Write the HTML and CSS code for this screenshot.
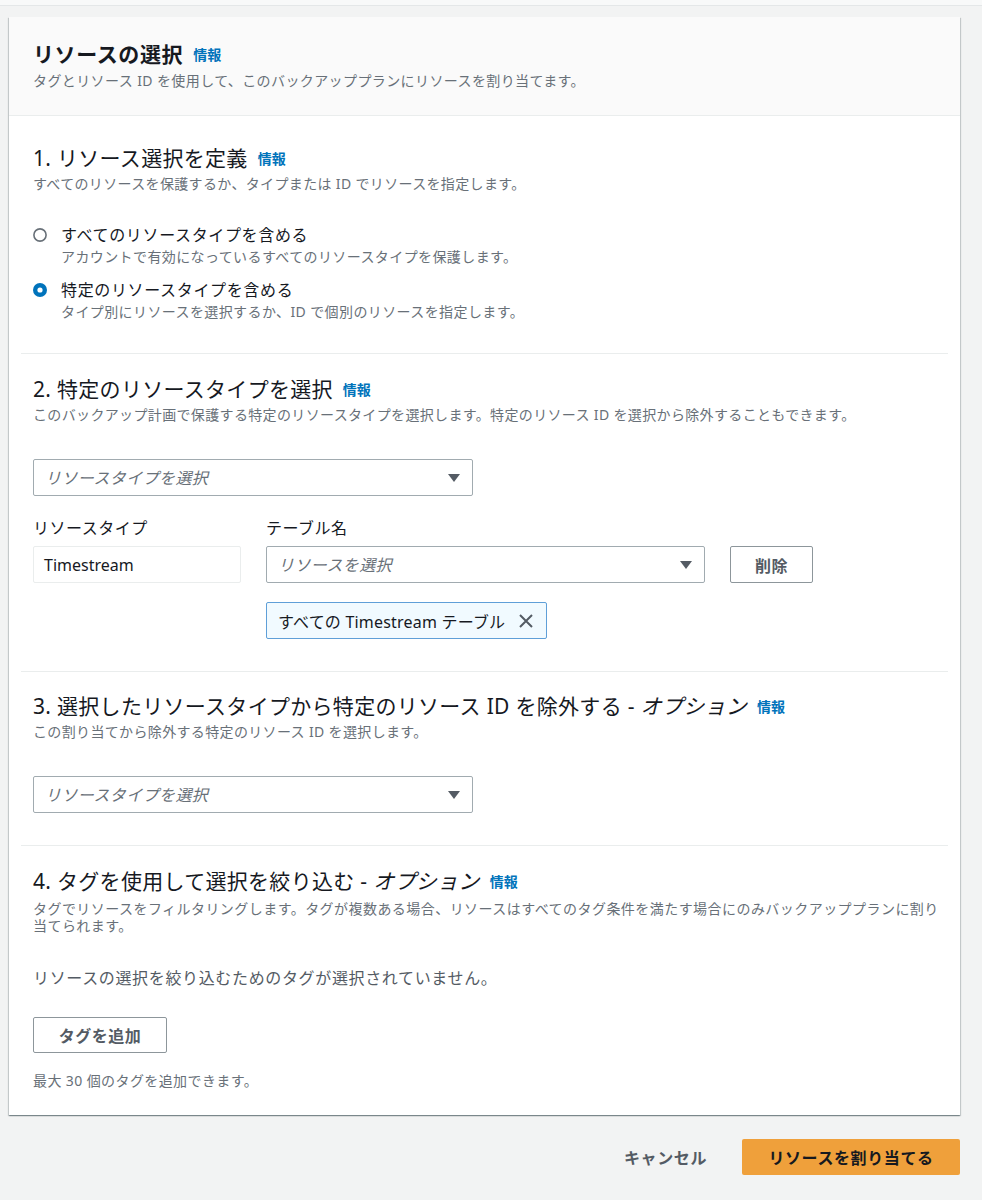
FILE: index.html
```html
<!DOCTYPE html>
<html lang="ja">
<head>
<meta charset="utf-8">
<title>リソースの選択</title>
<link rel="stylesheet" href="styles.css">
</head>
<body>
<div class="topbar"></div>
<main class="wrap">
  <section class="card">
    <header class="card-header">
      <h2 class="title">リソースの選択<a class="info">情報</a></h2>
      <p class="subtitle">タグとリソース ID を使用して、このバックアッププランにリソースを割り当てます。</p>
    </header>
    <div class="card-body">
      <div class="section s1">
        <h3 class="heading">1. リソース選択を定義<a class="info">情報</a></h3>
        <p class="desc">すべてのリソースを保護するか、タイプまたは ID でリソースを指定します。</p>
        <div class="radios">
          <div class="radio-item">
            <svg class="radio" viewBox="0 0 14 14" width="14" height="14"><circle cx="7" cy="7" r="6.1" fill="#fff" stroke="#687078" stroke-width="1.6"/></svg>
            <div>
              <div class="radio-label">すべてのリソースタイプを含める</div>
              <div class="radio-desc">アカウントで有効になっているすべてのリソースタイプを保護します。</div>
            </div>
          </div>
          <div class="radio-item">
            <svg class="radio" viewBox="0 0 14 14" width="14" height="14"><circle cx="7" cy="7" r="7" fill="#0073bb"/><circle cx="7" cy="7" r="2.6" fill="#fff"/></svg>
            <div>
              <div class="radio-label">特定のリソースタイプを含める</div>
              <div class="radio-desc">タイプ別にリソースを選択するか、ID で個別のリソースを指定します。</div>
            </div>
          </div>
        </div>
      </div>

      <div class="section s2">
        <h3 class="heading">2. 特定のリソースタイプを選択<a class="info">情報</a></h3>
        <p class="desc">このバックアップ計画で保護する特定のリソースタイプを選択します。特定のリソース ID を選択から除外することもできます。</p>
        <div class="select wide">
          <span class="placeholder">リソースタイプを選択</span>
          <svg class="caret" viewBox="0 0 12 8" width="12" height="8"><path d="M0 0H12L6 8Z" fill="#545b64"/></svg>
        </div>
        <div class="resource-grid">
          <div class="field-label">リソースタイプ</div>
          <div class="field-label">テーブル名</div>
          <div></div>
          <div class="static-box">Timestream</div>
          <div class="select">
            <span class="placeholder">リソースを選択</span>
            <svg class="caret" viewBox="0 0 12 8" width="12" height="8"><path d="M0 0H12L6 8Z" fill="#545b64"/></svg>
          </div>
          <button class="btn">削除</button>
          <div></div>
          <div class="token-cell">
            <span class="token">すべての Timestream テーブル
              <svg class="token-x" viewBox="0 0 16 16" width="16" height="16"><path d="M2 2L14 14M14 2L2 14" stroke="#545b64" stroke-width="2" fill="none"/></svg>
            </span>
          </div>
        </div>
      </div>

      <div class="section s3">
        <h3 class="heading">3. 選択したリソースタイプから特定のリソース ID を除外する - <i class="opt">オプション</i><a class="info">情報</a></h3>
        <p class="desc">この割り当てから除外する特定のリソース ID を選択します。</p>
        <div class="select wide">
          <span class="placeholder">リソースタイプを選択</span>
          <svg class="caret" viewBox="0 0 12 8" width="12" height="8"><path d="M0 0H12L6 8Z" fill="#545b64"/></svg>
        </div>
      </div>

      <div class="section s4">
        <h3 class="heading">4. タグを使用して選択を絞り込む - <i class="opt">オプション</i><a class="info">情報</a></h3>
        <p class="desc multi">タグでリソースをフィルタリングします。タグが複数ある場合、リソースはすべてのタグ条件を満たす場合にのみバックアッププランに割り当てられます。</p>
        <p class="empty">リソースの選択を絞り込むためのタグが選択されていません。</p>
        <button class="btn add">タグを追加</button>
        <p class="help">最大 30 個のタグを追加できます。</p>
      </div>
    </div>
  </section>

  <div class="actions">
    <button class="btn-link">キャンセル</button>
    <button class="btn-primary">リソースを割り当てる</button>
  </div>
</main>
</body>
</html>
```

FILE: styles.css
```css
* { box-sizing: border-box; }

body {
  margin: 0;
  background: #f2f3f3;
  font-family: "Noto Sans", "Noto Sans CJK JP", sans-serif;
  color: #16191f;
}

.topbar {
  height: 6px;
  background: #f8f9f9;
  border-bottom: 1px solid #e4e7e8;
}

.wrap {
  width: 951px;
  margin-left: 9px;
  padding-top: 11px;
  padding-bottom: 30px;
}

.card {
  background: #fff;
  box-shadow: 0 1px 1px 0 rgba(0, 28, 36, 0.3), 1px 1px 1px 0 rgba(0, 28, 36, 0.15), -1px 1px 1px 0 rgba(0, 28, 36, 0.15);
}

.card-header {
  background: #fafafa;
  border-bottom: 1px solid #eaeded;
  padding: 23px 24px 25px;
}

.title {
  margin: 0;
  font-size: 21px;
  line-height: 28px;
  font-weight: 700;
  letter-spacing: 0.6px;
  display: flex;
  align-items: center;
}

.info {
  color: #0073bb;
  font-size: 14px;
  font-weight: 700;
  letter-spacing: 0;
  margin-left: 10px;
  line-height: 20px;
  position: relative;
  top: 1px;
}

.subtitle {
  margin: 4px 0 0;
  font-size: 14px;
  line-height: 18px;
  letter-spacing: 0.4px;
  color: #687078;
}

.card-body {
  padding: 7px 12px 0;
}

.section {
  padding: 21px 0 32px 12px;
  border-top: 1px solid #eaeded;
}

.section.s1 { border-top: 0; }
.section.s3 { padding-top: 20px; }
.section.s4 { padding-bottom: 25px; }

.heading {
  margin: 0;
  font-size: 21px;
  line-height: 28px;
  font-weight: 400;
  letter-spacing: 0.3px;
  display: flex;
  align-items: center;
  white-space: pre;
}

.opt { font-style: italic; }

.desc {
  margin: 3px 0 0;
  font-size: 14px;
  line-height: 18px;
  letter-spacing: 0.35px;
  color: #687078;
}

.desc.multi {
  line-height: 17px;
  margin-top: 5px;
  letter-spacing: 0.45px;
}

.radios {
  margin-top: 31px;
  display: flex;
  flex-direction: column;
  gap: 13px;
}

.radio-item {
  display: grid;
  grid-template-columns: 14px 1fr;
  column-gap: 14px;
}

.radio { margin-top: 4px; display: block; }

.radio-label {
  font-size: 16px;
  line-height: 22px;
  letter-spacing: 0.65px;
}

.radio-desc {
  margin-top: 2px;
  font-size: 14px;
  line-height: 18px;
  letter-spacing: 0.4px;
  color: #687078;
}

.select {
  height: 37px;
  border: 1px solid #a1abb0;
  border-radius: 2px;
  display: flex;
  align-items: center;
  justify-content: space-between;
  padding: 0 12px 0 11px;
  background: #fff;
}

.select.wide {
  width: 440px;
  margin-top: 35px;
}

.placeholder {
  font-style: italic;
  color: #687078;
  font-size: 16px;
  line-height: 20px;
  letter-spacing: 0.4px;
}

.caret { display: block; }

.resource-grid {
  margin-top: 22px;
  display: grid;
  grid-template-columns: 208px 439px 83px;
  column-gap: 25px;
  align-items: center;
}

.field-label {
  font-size: 16px;
  line-height: 20px;
  letter-spacing: 0.5px;
  margin-bottom: 8px;
}

.static-box {
  height: 37px;
  border: 1px solid #eaeded;
  border-radius: 2px;
  padding-left: 10px;
  display: flex;
  align-items: center;
  font-size: 16px;
}

.resource-grid .select { height: 37px; }

.btn {
  height: 37px;
  border: 1px solid #8d969b;
  border-radius: 2px;
  background: #fff;
  color: #545b64;
  font-family: inherit;
  font-size: 16px;
  font-weight: 700;
  letter-spacing: 0.5px;
  padding: 0;
}

.token-cell { margin-top: 19px; }

.token {
  display: inline-flex;
  align-items: center;
  height: 37px;
  padding: 0 12px 0 11px;
  background: #f1faff;
  border: 1px solid #5f9fd8;
  border-radius: 2px;
  font-size: 16px;
  letter-spacing: 0.2px;
  gap: 13px;
  white-space: nowrap;
}

.token-x { display: block; }

.empty {
  margin: 33px 0 0;
  font-size: 16px;
  line-height: 22px;
  letter-spacing: 0.65px;
  color: #545b64;
}

.btn.add {
  display: block;
  margin-top: 28px;
  width: 134px;
  height: 36px;
}

.help {
  margin: 19px 0 0;
  font-size: 14px;
  line-height: 18px;
  letter-spacing: 0.4px;
  color: #687078;
}

.actions {
  margin-top: 24px;
  display: flex;
  justify-content: flex-end;
  align-items: center;
  gap: 15px;
}

.btn-link {
  height: 36px;
  border: 0;
  background: transparent;
  color: #545b64;
  font-family: inherit;
  font-size: 16px;
  font-weight: 700;
  letter-spacing: 0.6px;
  padding: 0 20px;
}

.btn-primary {
  height: 36px;
  width: 218px;
  border: 0;
  border-radius: 2px;
  background: #efa03b;
  color: #16191f;
  font-family: inherit;
  font-size: 16px;
  font-weight: 700;
  letter-spacing: 0.6px;
  padding: 0;
}
```
